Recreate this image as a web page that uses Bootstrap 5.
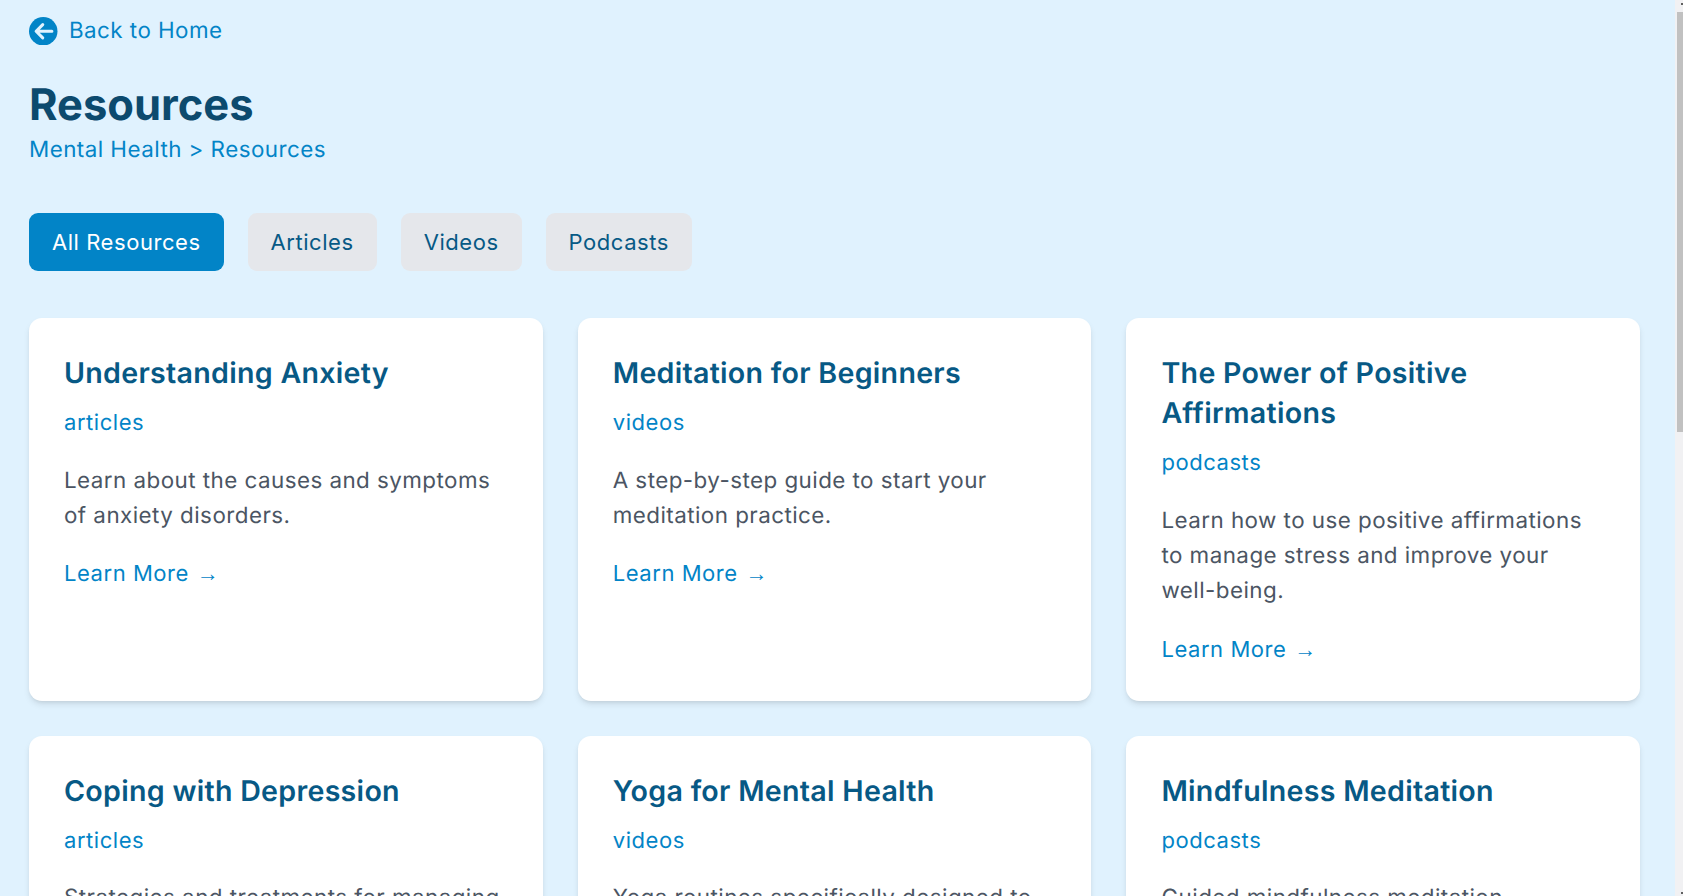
<!DOCTYPE html>
<html lang="en">
<head>
<meta charset="utf-8">
<title>Resources</title>
<link href="https://cdn.jsdelivr.net/npm/bootstrap@5.3.0/dist/css/bootstrap.min.css" rel="stylesheet">
<style>
::-webkit-scrollbar{display:none}
body{background:#e0f2fe;font-family:Inter,"Liberation Sans",sans-serif;font-size:22px;color:#4b5563;text-rendering:geometricPrecision;letter-spacing:.025em}
.page-wrap{padding:12px 43px 35px 29px;min-height:1860px}
.scroll-rail{position:fixed;top:0;right:0;bottom:0;width:8px;background:#f1f1f3}
.scroll-rail::before,.scroll-rail::after{content:"";position:absolute;right:0;width:2px;height:2px;background:#606060}
.scroll-rail::before{top:3px}
.scroll-rail::after{bottom:2px}
.scroll-knob{margin-top:12px;height:420px;margin-left:2px;background:#c1c1c1}
.back-link{color:#0284c7;font-size:22.4px;letter-spacing:.02em;gap:11.5px;height:38px}
.back-icon{width:28.5px;height:28.5px}
.page-title{font-size:43.5px;font-weight:700;color:#0c4a6e;line-height:1.2;letter-spacing:0;margin:24px 0 1px}
.crumbs{color:#0284c7;font-size:22.4px;letter-spacing:.02em;line-height:35.2px;margin:0 0 45.5px}
.filters{gap:24px;margin-bottom:47px}
.filter-btn{background:#e5e7eb;color:#075985;font-size:22px;height:58px;padding:0 23px;border:0;border-radius:9px;letter-spacing:.025em}
.filter-btn.on{background:#0284c7;color:#fff}
.res-grid{--bs-gutter-x:35.2px;--bs-gutter-y:35.2px}
.res-card{background:#fff;border:0;border-radius:13px;padding:35px 35px 34px;box-shadow:0 4px 7px -1px rgba(0,0,0,.1),0 2px 4px -2px rgba(0,0,0,.1)}
.res-title{font-size:28.6px;font-weight:600;color:#075985;line-height:1.4;letter-spacing:.01em;margin:0 0 13px}
.res-kind{color:#0284c7;font-size:22px;line-height:1.6;margin:0 0 21.5px}
.res-desc{font-size:22.4px;letter-spacing:.02em;line-height:35.2px;color:#4b5563;margin:0 0 24px}
.res-more{color:#0284c7;font-size:22px;text-decoration:none}
.more-arrow{font-family:"Liberation Sans",sans-serif;margin-left:1px}
</style>
</head>
<body>
<div class="scroll-rail"><div class="scroll-knob"></div></div>
<div class="page-wrap">
  <a class="back-link d-inline-flex align-items-center text-decoration-none" href="#">
    <svg class="back-icon" viewBox="0 0 28 28" aria-hidden="true"><circle cx="14" cy="14" r="14" fill="#0284c7"/><path d="M22.5 14H7.5M13.5 7.5 7 14l6.5 6.5" fill="none" stroke="#e0f2fe" stroke-width="3" stroke-linecap="round" stroke-linejoin="round"/></svg>
    <span>Back to Home</span>
  </a>
  <h1 class="page-title">Resources</h1>
  <p class="crumbs">Mental Health &gt; Resources</p>
  <div class="filters d-flex">
    <button class="btn filter-btn on" type="button">All Resources</button>
    <button class="btn filter-btn" type="button">Articles</button>
    <button class="btn filter-btn" type="button">Videos</button>
    <button class="btn filter-btn" type="button">Podcasts</button>
  </div>
  <div class="row row-cols-3 res-grid">
    <div class="col"><div class="card res-card h-100"><h3 class="res-title">Understanding Anxiety</h3><p class="res-kind">articles</p><p class="res-desc">Learn about the causes and symptoms of anxiety disorders.</p><a class="res-more" href="#">Learn More <span class="more-arrow">→</span></a></div></div>
    <div class="col"><div class="card res-card h-100"><h3 class="res-title">Meditation for Beginners</h3><p class="res-kind">videos</p><p class="res-desc">A step-by-step guide to start your meditation practice.</p><a class="res-more" href="#">Learn More <span class="more-arrow">→</span></a></div></div>
    <div class="col"><div class="card res-card h-100"><h3 class="res-title">The Power of Positive Affirmations</h3><p class="res-kind">podcasts</p><p class="res-desc">Learn how to use positive affirmations to manage stress and improve your well-being.</p><a class="res-more" href="#">Learn More <span class="more-arrow">→</span></a></div></div>
    <div class="col"><div class="card res-card h-100"><h3 class="res-title">Coping with Depression</h3><p class="res-kind">articles</p><p class="res-desc">Strategies and treatments for managing depression in daily life.</p><a class="res-more" href="#">Learn More <span class="more-arrow">→</span></a></div></div>
    <div class="col"><div class="card res-card h-100"><h3 class="res-title">Yoga for Mental Health</h3><p class="res-kind">videos</p><p class="res-desc">Yoga routines specifically designed to support your mental health.</p><a class="res-more" href="#">Learn More <span class="more-arrow">→</span></a></div></div>
    <div class="col"><div class="card res-card h-100"><h3 class="res-title">Mindfulness Meditation</h3><p class="res-kind">podcasts</p><p class="res-desc">Guided mindfulness meditation sessions for a calmer and clearer mind.</p><a class="res-more" href="#">Learn More <span class="more-arrow">→</span></a></div></div>
  </div>
</div>
<script src="https://cdn.jsdelivr.net/npm/bootstrap@5.3.0/dist/js/bootstrap.bundle.min.js"></script>
</body>
</html>
